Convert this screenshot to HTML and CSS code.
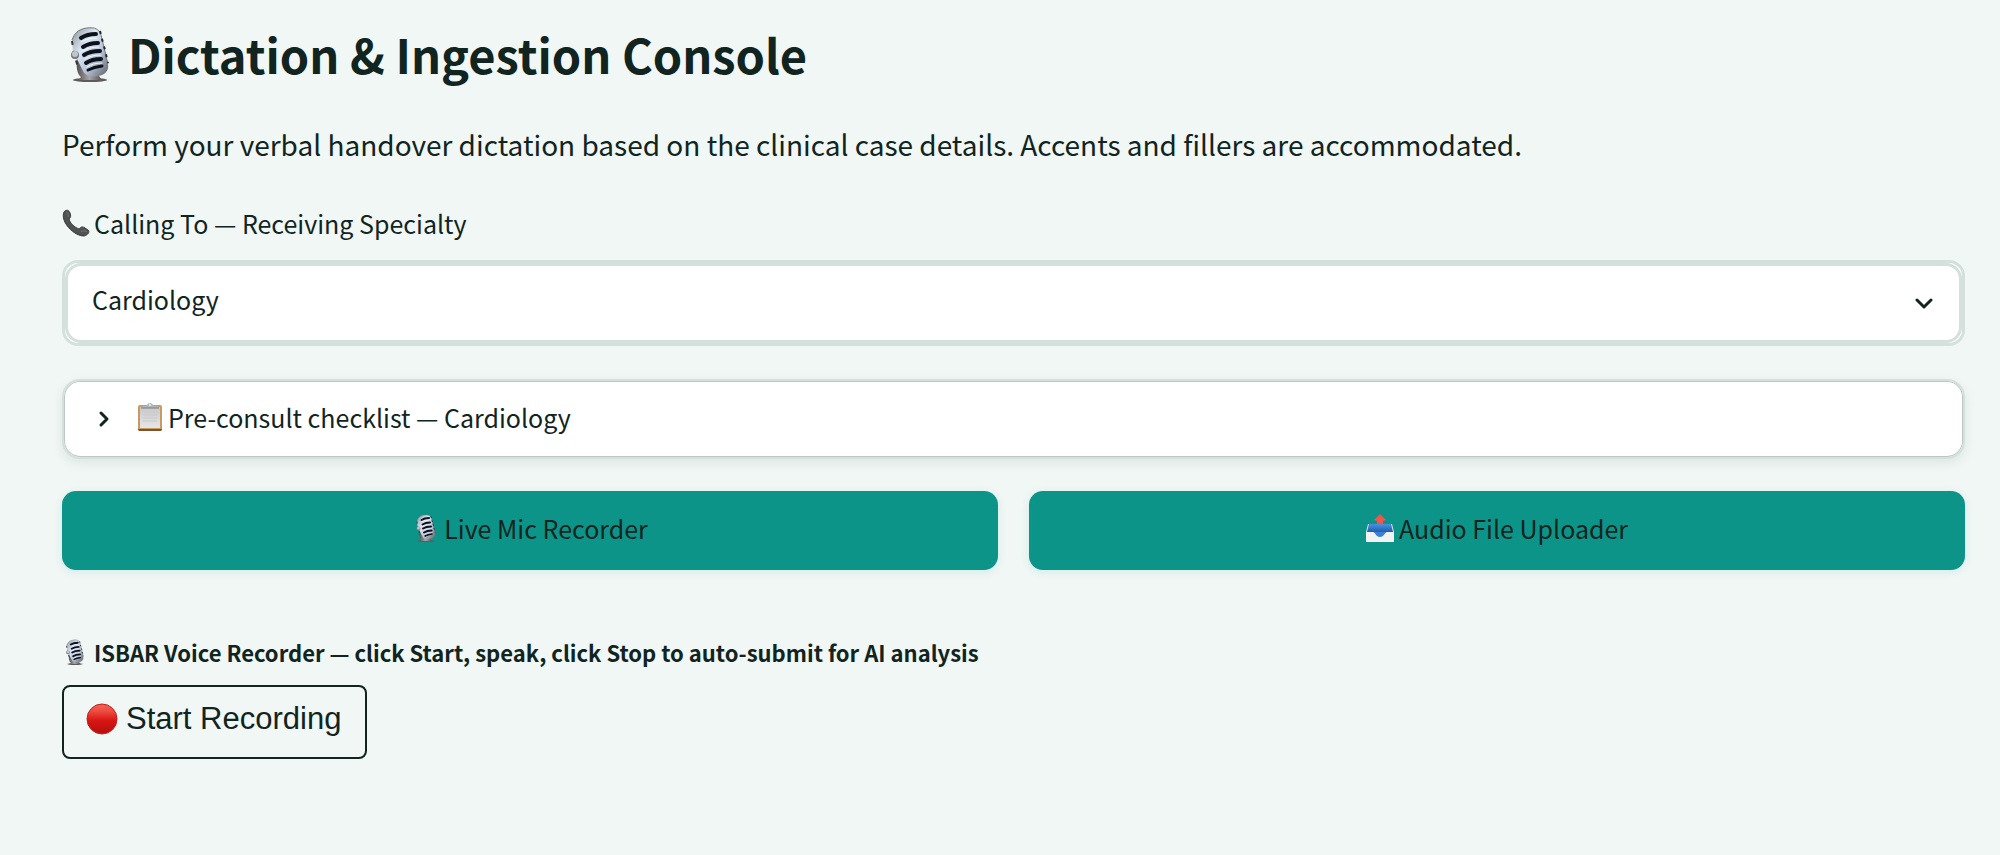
FILE: index.html
```html
<!DOCTYPE html>
<html lang="en">
<head>
    <meta charset="UTF-8">
    <title>Dictation &amp; Ingestion Console</title>
    <link rel="stylesheet" href="styles.css">
</head>
<body>

<!-- shared icons -->
<svg class="sprite" aria-hidden="true">
    <defs>
        <linearGradient id="metal" x1="0" y1="0" x2="1" y2="1">
            <stop offset="0" stop-color="#8d9096"/>
            <stop offset="0.35" stop-color="#dbe7f6"/>
            <stop offset="0.65" stop-color="#b4c3d8"/>
            <stop offset="1" stop-color="#5d5c5e"/>
        </linearGradient>
        <linearGradient id="stand" x1="0" y1="0" x2="1" y2="0">
            <stop offset="0" stop-color="#55504f"/>
            <stop offset="0.5" stop-color="#a9a5a6"/>
            <stop offset="1" stop-color="#55504f"/>
        </linearGradient>
        <linearGradient id="red" x1="0" y1="0" x2="0" y2="1">
            <stop offset="0" stop-color="#f0675a"/>
            <stop offset="0.25" stop-color="#ee4a3e"/>
            <stop offset="0.55" stop-color="#d91614"/>
            <stop offset="1" stop-color="#b30f0c"/>
        </linearGradient>
        <linearGradient id="blue" x1="0" y1="0" x2="0" y2="1">
            <stop offset="0" stop-color="#4a92e0"/>
            <stop offset="1" stop-color="#1f5cae"/>
        </linearGradient>
        <linearGradient id="paper" x1="0" y1="0" x2="0" y2="1">
            <stop offset="0" stop-color="#c9c9cb"/>
            <stop offset="1" stop-color="#e6e6e8"/>
        </linearGradient>
    </defs>

    <symbol id="mic" viewBox="-1 -3 54 60">
        <ellipse cx="27" cy="53" rx="17" ry="2" fill="#5e5c5b"/>
        <path d="M14 30c-1 10 0 17 4 20l-3 3h24l-3-4-8-2-9-17z" fill="url(#stand)"/>
        <path d="M9 14C10 7 15 2 24 1c8-1 12 1 14 7l7 29c1 6-2 10-9 12-9 2-14 0-17-7L10 24z" fill="url(#metal)"/>
        <path d="M9 13C11 7 15 2 24 1c8-1 12 1 14 7l7 29" fill="none" stroke="#77797d" stroke-width="1"/>
        <path d="M37 4l2 8 3 11 3 13" fill="none" stroke="#24262b" stroke-width="2" stroke-dasharray="3 5"/>
        <path d="M9 14l2 13 4 13" fill="none" stroke="#34343a" stroke-width="2" stroke-dasharray="4 6"/>
        <g fill="none" stroke="#10121a" stroke-width="4" stroke-linecap="round">
            <path d="M18 11q6-4 15-4"/>
            <path d="M20 20q6-4 15-4"/>
            <path d="M21 28q6-4 16-4"/>
            <path d="M23 36q6-4 15-4"/>
            <path d="M25 43q6-3 14-4" stroke-width="3"/>
        </g>
        <g fill="none" stroke="#f3f8ff" stroke-width="1" stroke-linecap="round">
            <path d="M18 15q6-4 16-4"/>
            <path d="M20 24q6-4 16-4"/>
            <path d="M22 32q6-4 16-4"/>
            <path d="M24 40q6-4 15-4"/>
        </g>
        <circle cx="12" cy="28" r="4" fill="#77777b"/>
        <circle cx="12" cy="27" r="3" fill="#c4c5c9"/>
    </symbol>

    <symbol id="phone" viewBox="0 0 28 28">
        <path d="M2 3C4 0 7 1 8 4c1 3 1 4-1 6 1 4 5 8 10 10 2-2 3-3 6-1l3 2c2 2 0 5-4 6C12 27-2 13 2 3z" fill="#505253" stroke="#3a3c3c" stroke-width="1"/>
        <path d="M4 4c2-1 3 2 2 4M19 23c2-2 5-1 6 0" fill="none" stroke="#777979" stroke-width="1"/>
    </symbol>

    <symbol id="clipboard" viewBox="0 0 24 28">
        <rect x="0" y="2" width="24" height="26" rx="2" fill="#c79a62"/>
        <path d="M0 26h24a2 2 0 0 1-2 2H2a2 2 0 0 1-2-2z" fill="#7d532b"/>
        <rect x="2" y="4" width="20" height="21" fill="url(#paper)"/>
        <path d="M5 9h14M5 12h14M5 15h14M5 18h14" stroke="#c9c9cb" stroke-width="1"/>
        <path d="M3 5c0-2 2-2 5-2 1 0 1-3 4-3s3 3 4 3c3 0 5 0 5 2z" fill="#b3b7ba"/>
        <path d="M3 5h18" stroke="#777c7d" stroke-width="1"/>
        <circle cx="12" cy="2" r="1" fill="#f0f6f4"/>
    </symbol>

    <symbol id="outbox" viewBox="0 0 28 28">
        <path d="M2 10h24l2 8v9a1 1 0 0 1-1 1H1a1 1 0 0 1-1-1v-9z" fill="#dfe3e6"/>
        <path d="M3 10h22l2 8H1z" fill="url(#blue)"/>
        <path d="M0 18h7c2 0 3 5 7 5s5-5 7-5h7v9a1 1 0 0 1-1 1H1a1 1 0 0 1-1-1z" fill="#f1f2f2"/>
        <path d="M7 18h14c-2 0-3 5-7 5s-5-5-7-5z" fill="#3b82d4"/>
        <path d="M14 0l6 6-3 1v3h-6V7L8 6z" fill="#f2554c"/>
    </symbol>
</svg>

<main class="console">
    <h2 class="title">
        <svg class="mic-lg" aria-hidden="true"><use href="#mic"/></svg>
        <span>Dictation &amp; Ingestion Console</span>
    </h2>
    <p class="intro">Perform your verbal handover dictation based on the clinical case details. Accents and fillers are accommodated.</p>

    <label class="label" for="specialty">
        <svg class="emoji" aria-hidden="true"><use href="#phone"/></svg>
        <span>Calling To — Receiving Specialty</span>
    </label>
    <div class="select-box">
        <select id="specialty">
            <option>Cardiology</option>
        </select>
        <svg class="arrow" viewBox="0 0 18 12" aria-hidden="true"><path d="M2 2l7 7 7-7"/></svg>
    </div>

    <details class="checklist">
        <summary>
            <svg class="chevron" viewBox="0 0 12 18" aria-hidden="true"><path d="M3 3l6 6-6 6"/></svg>
            <svg class="clip" aria-hidden="true"><use href="#clipboard"/></svg>
            <span>Pre-consult checklist — Cardiology</span>
        </summary>
    </details>

    <div class="modes">
        <button type="button" class="mode">
            <svg class="mic-md" aria-hidden="true"><use href="#mic"/></svg>
            <span>Live Mic Recorder</span>
        </button>
        <button type="button" class="mode">
            <svg class="emoji" aria-hidden="true"><use href="#outbox"/></svg>
            <span>Audio File Uploader</span>
        </button>
    </div>

    <p class="rec-label">
        <svg class="mic-sm" aria-hidden="true"><use href="#mic"/></svg>
        <span>ISBAR Voice Recorder — click Start, speak, click Stop to auto-submit for AI analysis</span>
    </p>
    <button type="button" class="start">
        <svg class="dot" viewBox="0 0 32 32" aria-hidden="true">
            <circle cx="16" cy="16" r="15" fill="url(#red)" stroke="#c3201a"/>
        </svg>
        <span>Start Recording</span>
    </button>
</main>
</body>
</html>
```
FILE: styles.css
```css
* {
    box-sizing: border-box;
}

body {
    margin: 0;
    background: #f0f7f5;
    color: #11241f;
    font-family: "Noto Sans CJK SC", "Noto Sans", sans-serif;
    font-size: 25px;
    line-height: 36px;
}

svg {
    flex: none;
    display: block;
}

.sprite {
    position: absolute;
    width: 0;
    height: 0;
}

.console {
    padding: 24px 35px 32px 62px;
}

/* heading */
.title {
    display: flex;
    align-items: center;
    gap: 12px;
    margin: 0 0 38px;
    font-size: 47px;
    line-height: 60px;
    font-weight: 700;
}

.intro {
    margin: 0 0 39px;
    font-size: 28px;
    line-height: 44px;
}

/* icon sizes */
.mic-lg {
    width: 54px;
    height: 60px;
}

.mic-md {
    width: 27px;
    height: 30px;
}

.mic-sm {
    width: 25px;
    height: 28px;
}

.emoji {
    width: 28px;
    height: 28px;
}

.clip {
    width: 24px;
    height: 28px;
}

.dot {
    width: 32px;
    height: 32px;
}

/* specialty select */
.label {
    display: flex;
    align-items: center;
    gap: 4px;
    margin-bottom: 19px;
}

.select-box {
    position: relative;
    margin-bottom: 33px;
    border: 3px solid #d3e0dc;
    border-radius: 16px;
    background: #fff;
}

.select-box select {
    display: block;
    width: 100%;
    height: 80px;
    padding: 0 60px 9px 24px;
    border: 3px solid #d3e0dc;
    border-radius: 16px;
    background: #fff;
    color: inherit;
    font: inherit;
    appearance: none;
}

.arrow {
    position: absolute;
    top: 35px;
    right: 29px;
    width: 18px;
    height: 12px;
    pointer-events: none;
}

.arrow path,
.chevron path {
    fill: none;
    stroke: #11241f;
    stroke-width: 3;
    stroke-linecap: round;
    stroke-linejoin: round;
}

/* checklist */
.checklist {
    margin-bottom: 32px;
    border: 2px solid #d3e0dc;
    border-radius: 18px;
    background: #fff;
    box-shadow: inset 0 0 0 1px #bcc8c4, 0 4px 12px rgba(17, 36, 31, 0.08);
}

.checklist summary {
    display: flex;
    align-items: center;
    height: 76px;
    padding: 0 32px 4px;
    list-style: none;
    cursor: pointer;
}

.chevron {
    width: 12px;
    height: 18px;
    margin: 4px 28px 0 2px;
}

.clip {
    margin-right: 6px;
}

/* mode buttons */
.modes {
    display: grid;
    grid-template-columns: 1fr 1fr;
    gap: 31px;
    margin-bottom: 64px;
}

.mode {
    display: flex;
    align-items: center;
    justify-content: center;
    gap: 5px;
    height: 79px;
    padding: 0 0 5px;
    border: 0;
    border-radius: 14px;
    background: #0d9488;
    box-shadow: 0 2px 8px rgba(13, 148, 136, 0.12);
    color: #11241f;
    font: inherit;
}

/* recorder */
.rec-label {
    display: flex;
    align-items: center;
    gap: 7px;
    margin: 0 0 15px;
    font-size: 22px;
    font-weight: 700;
}

.start {
    display: flex;
    align-items: center;
    gap: 8px;
    height: 74px;
    padding: 0 24px 6px 22px;
    border: 2px solid #11241f;
    border-radius: 8px;
    background: transparent;
    color: #11241f;
    font-family: "Liberation Sans", Arial, sans-serif;
    font-size: 31px;
}
```
